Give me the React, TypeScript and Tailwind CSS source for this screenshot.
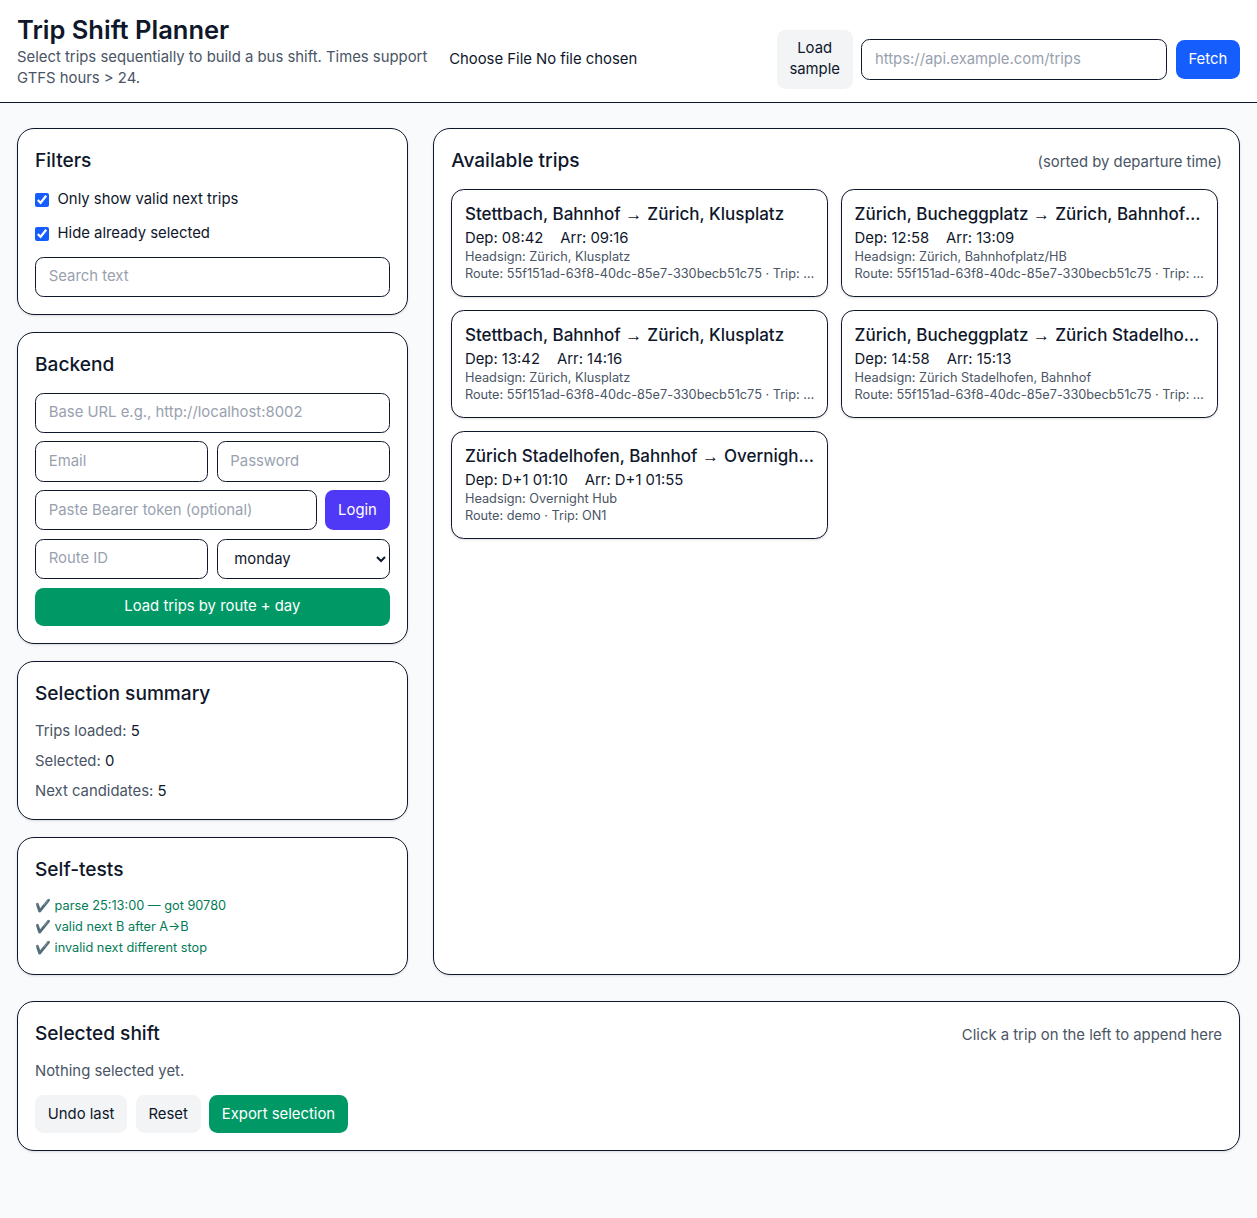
const inputCls =
  "w-full rounded-lg border border-slate-900 bg-white px-3 py-2 text-sm text-slate-900 placeholder-gray-400 outline-none";

const trips = [
  { from: "Stettbach, Bahnhof", to: "Zürich, Klusplatz", dep: "08:42", arr: "09:16", head: "Zürich, Klusplatz", route: "55f151ad-63f8-40dc-85e7-330becb51c75", trip: "20f3a9c1-7f5e-4f62-9b11-04ad" },
  { from: "Zürich, Bucheggplatz", to: "Zürich, Bahnhofplatz/HB", dep: "12:58", arr: "13:09", head: "Zürich, Bahnhofplatz/HB", route: "55f151ad-63f8-40dc-85e7-330becb51c75", trip: "20f3a9c1-7f5e-4f62-9b11-04ae" },
  { from: "Stettbach, Bahnhof", to: "Zürich, Klusplatz", dep: "13:42", arr: "14:16", head: "Zürich, Klusplatz", route: "55f151ad-63f8-40dc-85e7-330becb51c75", trip: "20f3a9c1-7f5e-4f62-9b11-04af" },
  { from: "Zürich, Bucheggplatz", to: "Zürich Stadelhofen, Bahnhof", dep: "14:58", arr: "15:13", head: "Zürich Stadelhofen, Bahnhof", route: "55f151ad-63f8-40dc-85e7-330becb51c75", trip: "20f3a9c1-7f5e-4f62-9b11-04b0" },
  { from: "Zürich Stadelhofen, Bahnhof", to: "Overnight Hub", dep: "D+1 01:10", arr: "D+1 01:55", head: "Overnight Hub", route: "demo", trip: "ON1" },
];

function Card({ className = "", children }: { className?: string; children: React.ReactNode }) {
  return (
    <section className={`rounded-2xl border border-slate-900 bg-white p-4 shadow-sm ${className}`}>
      {children}
    </section>
  );
}

function TripCard({ t }: { t: (typeof trips)[number] }) {
  return (
    <button className="block w-full min-w-0 rounded-xl border border-slate-900 bg-white p-3 text-left shadow-sm">
      <div className="truncate font-medium text-slate-900">
        {t.from} <span className="mr-[0.5px] font-['Liberation_Sans',sans-serif] font-normal">→</span> {t.to}
      </div>
      <div className="text-sm text-slate-900">
        <span className="mr-3">Dep: {t.dep}</span> <span>Arr: {t.arr}</span>
      </div>
      <div className="truncate text-xs text-gray-600">Headsign: {t.head}</div>
      <div className="truncate text-xs tracking-[-0.02px] text-gray-600">
        Route: {t.route} · Trip: {t.trip}
      </div>
    </button>
  );
}

export default function App() {
  return (
    <div className="min-h-screen bg-slate-50 font-['Inter',sans-serif] text-slate-900 [html:has(&)]:text-[17px]">
      <header className="flex items-end justify-between border-b border-slate-900 bg-white px-4 py-3">
        <div className="w-[416px]">
          <h1 className="text-2xl font-semibold">Trip Shift Planner</h1>
          <p className="text-sm text-gray-600">
            Select trips sequentially to build a bus shift. Times support GTFS hours &gt; 24.
          </p>
        </div>
        <div className="flex items-center gap-2">
          <input type="file" className="w-[319px] text-sm" />
          <button className="w-[76px] rounded-lg bg-gray-100 px-3 py-2 text-sm">Load sample</button>
          <input className={`${inputCls} !w-72`} placeholder="https://api.example.com/trips" />
          <button className="rounded-lg bg-blue-600 px-3 py-2 text-sm text-white">Fetch</button>
        </div>
      </header>

      <main className="px-4 py-6">
        <div className="grid grid-cols-12 gap-6">
          <div className="col-span-4 flex flex-col gap-4">
            <Card>
              <h2 className="mb-3 text-lg font-medium">Filters</h2>
              <div className="flex flex-col gap-3">
                <label className="flex items-center gap-2 text-sm">
                  <input type="checkbox" defaultChecked className="size-[14px] accent-blue-600" />
                  Only show valid next trips
                </label>
                <label className="flex items-center gap-2 text-sm">
                  <input type="checkbox" defaultChecked className="size-[14px] accent-blue-600" />
                  Hide already selected
                </label>
                <input className={inputCls} placeholder="Search text" />
              </div>
            </Card>

            <Card>
              <h2 className="mb-3 text-lg font-medium">Backend</h2>
              <div className="flex flex-col gap-2">
                <input className={inputCls} placeholder="Base URL e.g., http://localhost:8002" />
                <div className="grid grid-cols-2 gap-2">
                  <input className={inputCls} placeholder="Email" />
                  <input className={inputCls} placeholder="Password" />
                </div>
                <div className="flex gap-2">
                  <input className={`${inputCls} flex-1`} placeholder="Paste Bearer token (optional)" />
                  <button className="rounded-lg bg-indigo-600 px-3 py-2 text-sm text-white">Login</button>
                </div>
                <div className="grid grid-cols-2 gap-2">
                  <input className={inputCls} placeholder="Route ID" />
                  <select className="w-full rounded-lg border border-slate-900 bg-white px-3 py-2 text-sm">
                    <option>monday</option>
                  </select>
                </div>
                <button className="w-full rounded-lg bg-emerald-600 px-3 py-2 text-sm text-white">
                  Load trips by route + day
                </button>
              </div>
            </Card>

            <Card>
              <h2 className="mb-3 text-lg font-medium">Selection summary</h2>
              <div className="space-y-2 text-sm text-gray-600">
                <div>Trips loaded: <span className="text-slate-900">5</span></div>
                <div>Selected: <span className="text-slate-900">0</span></div>
                <div>Next candidates: <span className="text-slate-900">5</span></div>
              </div>
            </Card>

            <Card>
              <h2 className="mb-[12.55px] text-lg font-medium">Self-tests</h2>
              <ul className="space-y-1 pb-[0.2px] text-xs text-emerald-700">
                <li>✔️ parse 25:13:00 — got 90780</li>
                <li>✔️ valid next B after A→B</li>
                <li>✔️ invalid next different stop</li>
              </ul>
            </Card>
          </div>

          <Card className="col-span-8">
            <div className="mb-[12.4px] flex items-baseline justify-between">
              <h2 className="text-lg font-medium">Available trips</h2>
              <span className="text-sm text-gray-600">(sorted by departure time)</span>
            </div>
            <div className="grid grid-cols-2 gap-3 pr-1">
              {trips.map((t, i) => (
                <TripCard key={i} t={t} />
              ))}
            </div>
          </Card>
        </div>

        <Card className="mt-6">
          <div className="mb-3 flex items-baseline justify-between">
            <h2 className="text-lg font-medium">Selected shift</h2>
            <span className="text-sm text-gray-600">Click a trip on the left to append here</span>
          </div>
          <p className="text-sm text-gray-600">Nothing selected yet.</p>
          <div className="mt-3 flex gap-2">
            <button className="rounded-lg bg-gray-100 px-3 py-2 text-sm">Undo last</button>
            <button className="rounded-lg bg-gray-100 px-3 py-2 text-sm">Reset</button>
            <button className="rounded-lg bg-emerald-600 px-3 py-2 text-sm text-white">Export selection</button>
          </div>
        </Card>
      </main>
    </div>
  );
}
